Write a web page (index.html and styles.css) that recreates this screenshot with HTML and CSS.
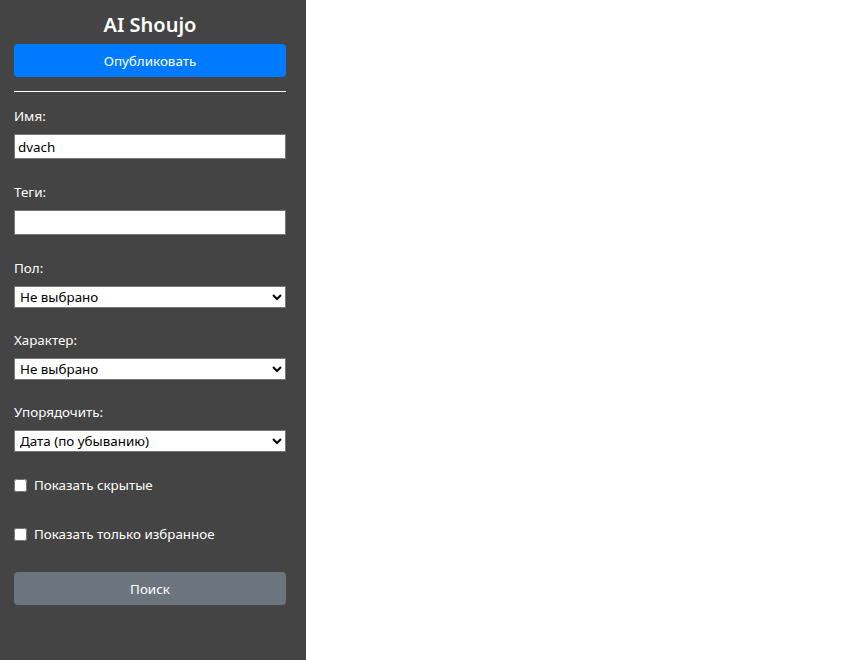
FILE: index.html
```html
<!DOCTYPE html>
<html>
<head>
    <title>AI Shoujo</title>
    <link rel="stylesheet" href="styles.css">
</head>
<body>

<div class="sidebar">
    <h1 class="title">AI Shoujo</h1>
    <button class="btn btn-primary">Опубликовать</button>
    <hr class="divider">

    <form class="filters">
        <div class="field">
            <label for="name">Имя:</label>
            <input type="text" id="name" value="dvach">
        </div>

        <div class="field">
            <label for="tags">Теги:</label>
            <input type="text" id="tags">
        </div>

        <div class="field field-select">
            <label for="gender">Пол:</label>
            <select id="gender">
                <option>Не выбрано</option>
            </select>
        </div>

        <div class="field field-select">
            <label for="personality">Характер:</label>
            <select id="personality">
                <option>Не выбрано</option>
            </select>
        </div>

        <div class="field field-select">
            <label for="order">Упорядочить:</label>
            <select id="order">
                <option>Дата (по убыванию)</option>
            </select>
        </div>

        <div class="check">
            <input type="checkbox" id="hidden">
            <label for="hidden">Показать скрытые</label>
        </div>

        <div class="check">
            <input type="checkbox" id="favs">
            <label for="favs">Показать только избранное</label>
        </div>

        <button type="button" class="btn btn-secondary">Поиск</button>
    </form>
</div>

</body>
</html>
```

FILE: styles.css
```css
body {
    margin: 0;
    height: 100vh;
    background-color: #fff;
    font-family: "Noto Sans", "Open Sans", sans-serif;
    font-size: 13.4px;
}

.sidebar {
    width: 306px;
    height: 100%;
    box-sizing: border-box;
    padding: 0 20px 0 14px;
    background-color: #444;
    color: #fff;
    display: flex;
    flex-direction: column;
}

.title {
    margin: 12px 0 6px;
    font-size: 20px;
    font-weight: 600;
    line-height: 26px;
    text-align: center;
}

.btn {
    width: 100%;
    height: 33px;
    border: none;
    border-radius: 4px;
    color: #fff;
    font-family: inherit;
    font-size: 13.4px;
    cursor: pointer;
}

.btn-primary {
    background-color: #007bff;
}

.btn-secondary {
    background-color: #6c757d;
    margin-top: 28px;
}

.divider {
    width: 100%;
    margin: 14px 0 14px;
    border: none;
    border-top: 1px solid #fff;
}

.filters {
    display: flex;
    flex-direction: column;
}

.field {
    display: flex;
    flex-direction: column;
    margin-bottom: 23px;
}

.field-select {
    margin-bottom: 22px;
}

.field label {
    line-height: 20px;
    margin-bottom: 8px;
}

.field input[type="text"] {
    height: 25px;
    box-sizing: border-box;
    border: 1px solid #767676;
    padding: 0 3px;
    font-family: inherit;
    font-size: 13.4px;
    color: #000;
}

.field select {
    height: 22px;
    box-sizing: border-box;
    border: 1px solid #767676;
    border-radius: 0;
    padding: 0 1px;
    font-family: inherit;
    font-size: 13.4px;
    background-color: #fff;
    color: #000;
}

.check {
    display: flex;
    align-items: center;
    height: 20px;
    margin-bottom: 29px;
}

.field-select + .check {
    margin-top: 1px;
}

.check + .check {
    margin-bottom: 0;
}

.check input {
    width: 13px;
    height: 13px;
    margin: 0 7px 0 0;
}
```
